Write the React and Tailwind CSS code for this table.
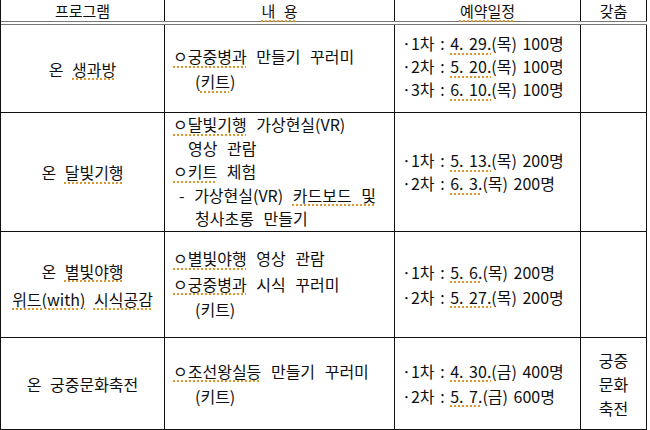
import React from "react";

const U = ({children}) => (
    <span className="underline decoration-dotted decoration-[#e0962e] decoration-[1.5px] underline-offset-[3px]">{children}</span>
);

const Cell = ({className = "", children}) => (
    <div className={`flex items-center border-r border-[#111] ${className}`}>{children}</div>
);

function Row({h, left, content, dates, extra}) {
    return (
        <div className={`grid grid-cols-[164px_230px_186px_66px] border-b border-[#111] ${h}`}>
            <Cell className="justify-center text-center">{left}</Cell>
            <Cell className="pl-[8px] [word-spacing:6px]">{content}</Cell>
            <Cell className="pl-[7px] [word-spacing:2px]">{dates}</Cell>
            <Cell className="justify-center text-center">{extra}</Cell>
        </div>
    );
}

export default function App() {
    return (
        <div className="w-[650px] h-[430px] bg-white text-[#0f0f0f] text-[16px] [word-spacing:5px] font-['Noto_Sans_CJK_KR',sans-serif] overflow-hidden">
            <div className="w-[647px] border-l border-[#111]">

                <div className="grid grid-cols-[164px_230px_186px_66px] h-[21px] text-[15px] leading-[20px]">
                    <Cell className="justify-center pt-[1px]">프로그램</Cell>
                    <Cell className="justify-center pt-[1px]"><U>내 용</U></Cell>
                    <Cell className="justify-center pt-[1px]"><U>예약일정</U></Cell>
                    <Cell className="justify-center pt-[1px]">갖춤</Cell>
                </div>
                <div className="h-[4px] border-y border-[#777]"></div>

                <Row
                    h="h-[88px]"
                    left={<p>온 <U>생과방</U></p>}
                    content={
                        <div className="leading-[25px] pt-[1px]">
                            <p><U>ㅇ궁중병과</U> 만들기 꾸러미</p>
                            <p className="pl-[22px]">(<U>키트</U>)</p>
                        </div>
                    }
                    dates={
                        <div className="leading-[23px] -mt-[4px]">
                            <p>·1차 : <U>4. 29.</U>(목) 100명</p>
                            <p>·2차 : <U>5. 20.</U>(목) 100명</p>
                            <p>·3차 : <U>6. 10.</U>(목) 100명</p>
                        </div>
                    }
                />

                <Row
                    h="h-[119px]"
                    left={<p>온 <U>달빛기행</U></p>}
                    content={
                        <div className="leading-[23.5px]">
                            <p><U>ㅇ달빛기행</U> 가상현실(VR)</p>
                            <p className="pl-[15px]">영상 관람</p>
                            <p><U>ㅇ키트</U> 체험</p>
                            <p className="pl-[6px]">- 가상현실(VR) <U>카드보드 및</U></p>
                            <p className="pl-[22px]">청사초롱 만들기</p>
                        </div>
                    }
                    dates={
                        <div className="leading-[23px]">
                            <p>·1차 : <U>5. 13.</U>(목) 200명</p>
                            <p>·2차 : <U>6. 3.</U>(목) 200명</p>
                        </div>
                    }
                />

                <Row
                    h="h-[106px]"
                    left={
                        <div className="leading-[28px]">
                            <p>온 <U>별빛야행</U></p>
                            <p><U>위드(with)</U> <U>시식공감</U></p>
                        </div>
                    }
                    content={
                        <div className="leading-[25.5px]">
                            <p><U>ㅇ별빛야행</U> 영상 관람</p>
                            <p><U>ㅇ궁중병과</U> 시식 꾸러미</p>
                            <p className="pl-[22px]">(키트)</p>
                        </div>
                    }
                    dates={
                        <div className="leading-[25px]">
                            <p>·1차 : <U>5. 6.</U>(목) 200명</p>
                            <p>·2차 : <U>5. 27.</U>(목) 200명</p>
                        </div>
                    }
                />

                <Row
                    h="h-[92px]"
                    left={<p>온 궁중문화축전</p>}
                    content={
                        <div className="leading-[25px]">
                            <p><U>ㅇ조선왕실등</U> 만들기 꾸러미</p>
                            <p className="pl-[22px]">(키트)</p>
                        </div>
                    }
                    dates={
                        <div className="leading-[25px]">
                            <p>·1차 : <U>4. 30.</U>(금) 400명</p>
                            <p>·2차 : <U>5. 7.</U>(금) 600명</p>
                        </div>
                    }
                    extra={
                        <div className="leading-[24px]">
                            <p>궁중</p>
                            <p>문화</p>
                            <p>축전</p>
                        </div>
                    }
                />

            </div>
        </div>
    );
}
